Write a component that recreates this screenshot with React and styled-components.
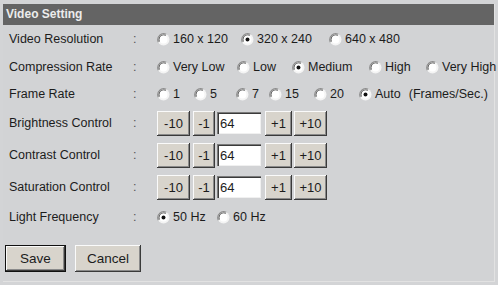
import React from "react";
import styled, { createGlobalStyle } from "styled-components";

const Global = createGlobalStyle`
  html, body { margin: 0; padding: 0; background: #d3d4d6; }
  body { font-family: "Liberation Sans", Arial, sans-serif; color: #1c1c1c; }
`;

const Panel = styled.div`
  margin: 4px 3px 0 3px;
  width: 492px;
  height: 278px;
  background: #d2d3d5;
  border-right: 1px solid #e2e2e2;
  border-bottom: 1px solid #e2e2e2;
  box-sizing: border-box;
`;

const Header = styled.div`
  height: 21px;
  background: #646464;
  color: #ececec;
  font-weight: 700;
  font-size: 12px;
  line-height: 21px;
  padding-left: 3px;
`;

const Row = styled.div`
  display: grid;
  grid-template-columns: 124px 24px 1fr;
  align-items: center;
  height: ${(p) => p.h}px;
  padding-left: 6px;
  font-size: 12.5px;
`;

const Colon = styled.span`
  color: #555;
`;

const Options = styled.div`
  display: flex;
  align-items: center;
`;

const Opt = styled.label`
  display: flex;
  align-items: center;
  width: ${(p) => (p.w ? p.w + "px" : "auto")};
  gap: 3px;
  white-space: nowrap;
`;

const Unit = styled.span`
  margin-left: 8px;
`;

const Btn = styled.button`
  height: 25px;
  min-width: ${(p) => p.w}px;
  padding: 0 4px;
  margin-right: ${(p) => p.mr || 3}px;
  font-family: "Liberation Sans", Arial, sans-serif;
  font-size: 13px;
  color: #1c1c1c;
  background: #d8d4cc;
  border: none;
  box-shadow: inset -1px -1px 0 #3a3a3a, inset 1px 1px 0 #fafafa,
    inset -2px -2px 0 #8a8a8a;
  box-sizing: border-box;
`;

const Field = styled.input`
  width: 44px;
  height: 22px;
  box-sizing: border-box;
  margin-right: 4px;
  padding: 1px 3px 0;
  font-family: "Liberation Sans", Arial, sans-serif;
  font-size: 13px;
  color: #1c1c1c;
  border: none;
  background: #fff;
  box-shadow: inset 1px 1px 0 #7a7a7a, inset 2px 2px 0 #3a3a3a,
    inset -1px -1px 0 #f0f0f0;
`;

const Footer = styled.div`
  display: flex;
  gap: 9px;
  padding: 14px 0 0 2px;
`;

const FootBtn = styled.button`
  height: 27px;
  width: ${(p) => p.w}px;
  font-family: "Liberation Sans", Arial, sans-serif;
  font-size: 13.5px;
  color: #1c1c1c;
  background: #d8d4cc;
  border: ${(p) => (p.def ? "1px solid #111" : "none")};
  box-shadow: inset -1px -1px 0 #3a3a3a, inset 1px 1px 0 #fafafa,
    inset -2px -2px 0 #8a8a8a;
  box-sizing: border-box;
`;

const Radio = ({ on }) => (
  <svg width="13" height="13" viewBox="0 0 12 12">
    <circle cx="6" cy="6" r="5.5" fill="#f4f4f4" />
    <path d="M1.2 8.5 A5.5 5.5 0 0 1 8.5 1.2" stroke="#8c8c8c" strokeWidth="1" fill="none" />
    <path d="M2.2 8 A4.5 4.5 0 0 1 8 2.2" stroke="#505050" strokeWidth="1" fill="none" />
    <circle cx="6" cy="6" r="3.6" fill="#fff" />
    {on && <circle cx="6" cy="6" r="1.8" fill="#111" />}
  </svg>
);

const RadioRow = ({ items }) => (
  <Options>
    {items.map(([t, w, on]) => (
      <Opt key={t} w={w}>
        <Radio on={on} />
        <span>{t}</span>
      </Opt>
    ))}
  </Options>
);

const Stepper = ({ value }) => (
  <Options>
    <Btn w={33} mr={3}>-10</Btn>
    <Btn w={22} mr={2}>-1</Btn>
    <Field defaultValue={value} />
    <Btn w={27} mr={2}>+1</Btn>
    <Btn w={33}>+10</Btn>
  </Options>
);

export default function App() {
  return (
    <>
      <Global />
      <Panel>
        <Header>Video Setting</Header>
        <Row h={28}>
          <span>Video Resolution</span>
          <Colon>:</Colon>
          <RadioRow
            items={[
              ["160 x 120", 84],
              ["320 x 240", 88, true],
              ["640 x 480"],
            ]}
          />
        </Row>
        <Row h={28}>
          <span>Compression Rate</span>
          <Colon>:</Colon>
          <RadioRow
            items={[
              ["Very Low", 80],
              ["Low", 55],
              ["Medium", 77, true],
              ["High", 57],
              ["Very High"],
            ]}
          />
        </Row>
        <Row h={26}>
          <span>Frame Rate</span>
          <Colon>:</Colon>
          <Options>
            <RadioRow
              items={[
                ["1", 37],
                ["5", 42],
                ["7", 33],
                ["15", 45],
                ["20", 45],
                ["Auto", 0, true],
              ]}
            />
            <Unit>(Frames/Sec.)</Unit>
          </Options>
        </Row>
        <Row h={32}>
          <span>Brightness Control</span>
          <Colon>:</Colon>
          <Stepper value="64" />
        </Row>
        <Row h={32}>
          <span>Contrast Control</span>
          <Colon>:</Colon>
          <Stepper value="64" />
        </Row>
        <Row h={32}>
          <span>Saturation Control</span>
          <Colon>:</Colon>
          <Stepper value="64" />
        </Row>
        <Row h={28}>
          <span>Light Frequency</span>
          <Colon>:</Colon>
          <RadioRow items={[["50 Hz", 60, true], ["60 Hz"]]} />
        </Row>
        <Footer>
          <FootBtn w={61} def>Save</FootBtn>
          <FootBtn w={66}>Cancel</FootBtn>
        </Footer>
      </Panel>
    </>
  );
}
